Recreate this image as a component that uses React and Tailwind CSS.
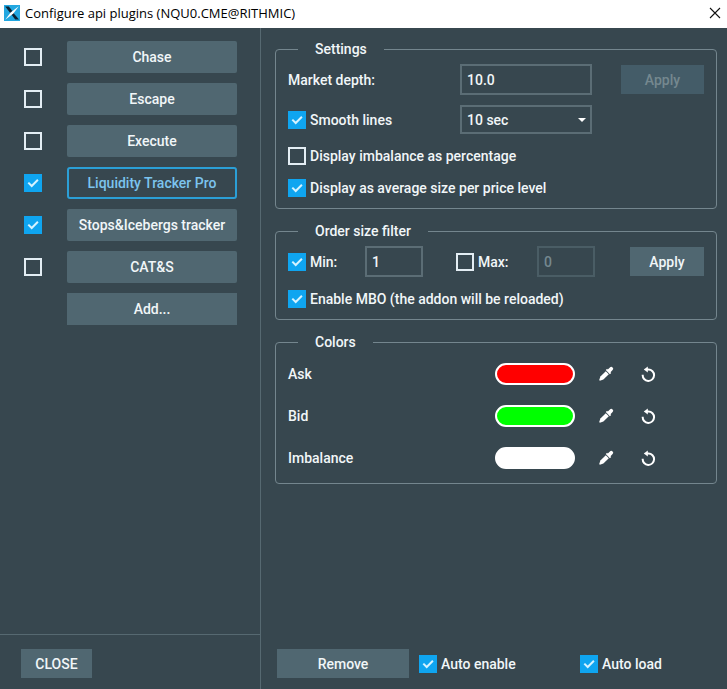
import React, { useState } from "react";

const PLUGINS = [
    { name: "Chase", enabled: false },
    { name: "Escape", enabled: false },
    { name: "Execute", enabled: false },
    { name: "Liquidity Tracker Pro", enabled: true },
    { name: "Stops&Icebergs tracker", enabled: true },
    { name: "CAT&S", enabled: false },
];

const COLORS = [
    { name: "Ask", value: "#ff0000" },
    { name: "Bid", value: "#00ff00" },
    { name: "Imbalance", value: "#ffffff" },
];

const Logo = () => (
    <svg className="size-4" viewBox="0 0 16 16" aria-hidden="true">
        <rect width="16" height="16" fill="#22a7e0" />
        <path d="M1.2 1.4h3.6L8.4 6 6.6 8.6z" fill="#0b2233" />
        <path d="M9 7.4 15 14.6h-3.8L7.4 9.6z" fill="#0b2233" />
        <path d="M14.8 1.2 9.4 8.6 1.2 14.8 6.6 7.6z" fill="#fff" />
    </svg>
);

const CloseIcon = () => (
    <svg className="size-3" viewBox="0 0 12 12" fill="none" stroke="#111" strokeWidth="1.1" aria-hidden="true">
        <path d="M1 1l10 10M11 1L1 11" />
    </svg>
);

const PickerIcon = () => (
    <svg className="size-4" viewBox="0 0 16 16" fill="#fff" aria-hidden="true">
        <path d="M14.6 1.4a1.9 1.9 0 0 0-2.7 0L9.8 3.5l-.7-.7-1.3 1.3 4.1 4.1 1.3-1.3-.7-.7 2.1-2.1a1.9 1.9 0 0 0 0-2.7z" />
        <path d="M7.8 5.2 2.4 10.6 1.2 14.1l.7.7 3.5-1.2 5.4-5.4z" />
    </svg>
);

const ResetIcon = () => (
    <svg className="size-4" viewBox="0 0 16 16" fill="none" aria-hidden="true">
        <path d="M2.7 8.8A5.7 5.7 0 1 0 8.4 3.5H6" stroke="#fff" strokeWidth="2" />
        <path d="M7.8 .6v6L3.8 3.5z" fill="#fff" />
    </svg>
);

const Checkbox = ({ label, hideLabel, defaultChecked, onChange }) => (
    <label className="flex items-center gap-1">
        <span className="grid size-[18px] shrink-0">
            <input
                type="checkbox"
                aria-label={label}
                className="peer col-start-1 row-start-1 size-[18px] appearance-none border-2 border-[#e3edf3] checked:border-[#0fa5f0] checked:bg-[#0fa5f0]"
                defaultChecked={defaultChecked}
                onChange={onChange}
            />
            <svg
                className="pointer-events-none invisible col-start-1 row-start-1 size-[18px] peer-checked:visible"
                viewBox="0 0 18 18"
                fill="none"
                stroke="#d5f3ff"
                strokeWidth="2"
                aria-hidden="true"
            >
                <path d="M4.3 8.6l3.4 3.4 6.2-6.2" />
            </svg>
        </span>
        {!hideLabel && <span className="leading-[18px] whitespace-nowrap">{label}</span>}
    </label>
);

const Group = ({ title, children }) => (
    <fieldset className="min-w-0 rounded-[4px] border border-[#74868e] px-3 pb-[11px]">
        <legend className="ml-[10px] px-[17px] leading-5">{title}</legend>
        {children}
    </fieldset>
);

const PluginList = () => {
    const [selected, setSelected] = useState("Liquidity Tracker Pro");

    return (
        <aside className="flex w-[261px] shrink-0 flex-col border-r border-[#566971]">
            <div className="flex flex-1 flex-col gap-[10px] pt-[13px] pr-[23px] pl-6">
                {PLUGINS.map((plugin) => (
                    <div key={plugin.name} className="flex items-center gap-[25px]">
                        <Checkbox label={plugin.name} hideLabel defaultChecked={plugin.enabled} />
                        <button
                            type="button"
                            onClick={() => setSelected(plugin.name)}
                            className={
                                selected === plugin.name
                                    ? "h-8 flex-1 rounded-[3px] border-2 border-[#2b9fd6] text-[#7cc4ee]"
                                    : "h-8 flex-1 rounded-[2px] bg-[#506771]"
                            }
                        >
                            {plugin.name}
                        </button>
                    </div>
                ))}
                <button type="button" className="ml-[43px] h-8 bg-[#506771]">Add...</button>
            </div>
            <div className="border-t border-[#566971] pt-[14px] pb-[11px] pl-[21px]">
                <button type="button" className="h-[29px] w-[71px] bg-[#506771]">CLOSE</button>
            </div>
        </aside>
    );
};

const SettingsGroup = () => (
    <Group title="Settings">
        <div className="mt-[5px] flex items-center">
            <label htmlFor="depth" className="w-[172px]">Market depth:</label>
            <input id="depth" defaultValue="10.0" className="h-[31px] w-[132px] border-2 border-[#5b6d75] px-[5px]" />
            <button type="button" disabled className="ml-auto h-[29px] w-[83px] bg-[#445c68] text-[#75888f]">Apply</button>
        </div>
        <div className="mt-[10px] flex items-center">
            <div className="w-[172px]">
                <Checkbox label="Smooth lines" defaultChecked />
            </div>
            <div className="grid w-[132px] items-center">
                <select aria-label="Smoothing period" className="col-start-1 row-start-1 h-[29px] appearance-none border-2 border-[#5b6d75] px-[5px]">
                    <option>10 sec</option>
                </select>
                <svg className="pointer-events-none col-start-1 row-start-1 mr-[6px] h-2 w-2 justify-self-end" viewBox="0 0 8 8" fill="#fff" aria-hidden="true">
                    <path d="M0 2h8L4 6z" />
                </svg>
            </div>
        </div>
        <div className="mt-[13px] flex flex-col gap-[14px]">
            <Checkbox label="Display imbalance as percentage" />
            <Checkbox label="Display as average size per price level" defaultChecked />
        </div>
    </Group>
);

const OrderSizeGroup = () => {
    const [maxOn, setMaxOn] = useState(false);

    return (
        <Group title="Order size filter">
            <div className="mt-[5px] flex items-center">
                <div className="w-[77px]">
                    <Checkbox label="Min:" defaultChecked />
                </div>
                <input aria-label="Min size" defaultValue="1" className="mr-[33px] h-[31px] w-[58px] border-2 border-[#5b6d75] px-[5px]" />
                <div className="w-[81px]">
                    <Checkbox label="Max:" onChange={(e) => setMaxOn(e.target.checked)} />
                </div>
                <input
                    aria-label="Max size"
                    defaultValue="0"
                    disabled={!maxOn}
                    className="h-[31px] w-[58px] border-2 border-[#5b6d75] px-[5px] disabled:border-[#4a5d65] disabled:text-[#75888f]"
                />
                <button type="button" className="ml-auto h-[29px] w-[74px] bg-[#506771]">Apply</button>
            </div>
            <div className="mt-[13px]">
                <Checkbox label="Enable MBO (the addon will be reloaded)" defaultChecked />
            </div>
        </Group>
    );
};

const ColorsGroup = () => (
    <Group title="Colors">
        <div className="flex flex-col gap-5 pt-[11px] pb-[3px]">
            {COLORS.map((color) => (
                <div key={color.name} className="flex h-[22px] items-center">
                    <span className="w-[207px]">{color.name}</span>
                    <button
                        type="button"
                        aria-label={`${color.name} color`}
                        className="mr-[23px] h-[22px] w-20 rounded-full border-2 border-white"
                        style={{ backgroundColor: color.value }}
                    />
                    <button type="button" aria-label={`Pick ${color.name} color`} className="mr-[26px]"><PickerIcon /></button>
                    <button type="button" aria-label={`Reset ${color.name} color`}><ResetIcon /></button>
                </div>
            ))}
        </div>
    </Group>
);

const App = () => {
    return (
        <div className="flex min-h-screen flex-col bg-[#37474f] font-['Roboto',sans-serif] text-[14px] leading-5 font-medium text-[#f1f6f8]">
            <header className="flex h-7 items-center bg-white pr-[6px] pb-[2px] pl-1 text-black">
                <Logo />
                <h1 className="ml-[5px] font-['Open_Sans',sans-serif] text-[13px] leading-4 font-normal">
                    Configure api plugins (NQU0.CME@RITHMIC)
                </h1>
                <button type="button" aria-label="Close window" className="ml-auto"><CloseIcon /></button>
            </header>
            <div className="flex flex-1">
                <PluginList />
                <main className="flex min-w-0 flex-1 flex-col pt-[11px] pr-[10px] pb-[11px] pl-[14px]">
                    <div className="flex flex-col gap-3">
                        <SettingsGroup />
                        <OrderSizeGroup />
                        <ColorsGroup />
                    </div>
                    <div className="mt-auto flex items-center pl-[2px]">
                        <button type="button" className="mr-[10px] h-[29px] w-[132px] bg-[#506771]">Remove</button>
                        <div className="w-[161px]">
                            <Checkbox label="Auto enable" defaultChecked />
                        </div>
                        <Checkbox label="Auto load" defaultChecked />
                    </div>
                </main>
            </div>
        </div>
    );
};

export default App;
